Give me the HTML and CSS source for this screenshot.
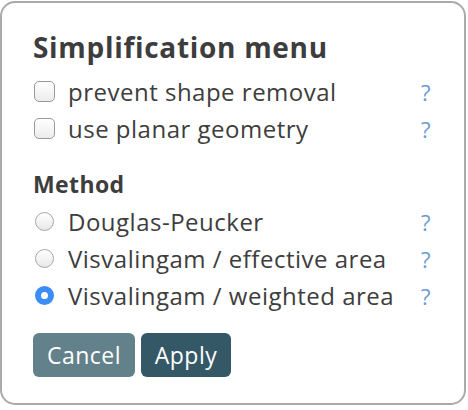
FILE: index.html
```html
<!DOCTYPE html>
<html>
<head>
<meta charset="utf-8">
<link rel="stylesheet" href="styles.css">
</head>
<body>
<div class="menu">
  <h1 class="title">Simplification menu</h1>
  <div class="row">
    <span class="check"></span>
    <span class="label">prevent shape removal</span>
    <span class="help">?</span>
  </div>
  <div class="row">
    <span class="check"></span>
    <span class="label">use planar geometry</span>
    <span class="help">?</span>
  </div>
  <h2 class="section">Method</h2>
  <div class="row radio-row">
    <span class="radio"></span>
    <span class="label">Douglas-Peucker</span>
    <span class="help">?</span>
  </div>
  <div class="row radio-row">
    <span class="radio"></span>
    <span class="label">Visvalingam / effective area</span>
    <span class="help">?</span>
  </div>
  <div class="row radio-row">
    <span class="radio selected"></span>
    <span class="label">Visvalingam / weighted area</span>
    <span class="help">?</span>
  </div>
  <div class="buttons">
    <button class="btn cancel">Cancel</button>
    <button class="btn apply">Apply</button>
  </div>
</div>
</body>
</html>
```

FILE: styles.css
```css
html, body {
  margin: 0;
  padding: 0;
  background: #ffffff;
}
body {
  font-family: "Open Sans", "Lato", sans-serif;
  color: #3d3d3d;
}
.menu {
  box-sizing: border-box;
  margin: 1px 0 0 0;
  width: 466px;
  height: 404px;
  border: 2px solid #aaaaaa;
  border-radius: 15px;
  padding: 26px 0 0 31px;
  display: flex;
  flex-direction: column;
}
.title {
  margin: 0 0 8px 0;
  font-size: 28px;
  line-height: 36px;
  font-weight: 700;
  letter-spacing: 0.7px;
}
.row {
  display: flex;
  align-items: center;
  height: 37px;
}
.label {
  font-size: 24px;
  margin-left: 13px;
  width: 353px;
  white-space: nowrap;
  letter-spacing: 0.5px;
}
.help {
  color: #6d9bd0;
  font-size: 22px;
}
.check {
  box-sizing: border-box;
  width: 21px;
  height: 21px;
  border: 1px solid #9a9a9a;
  border-radius: 5px;
  background: linear-gradient(#ffffff, #ececec);
  margin-left: 1px;
}
.section {
  margin: 22px 0 4px 0;
  font-size: 23px;
  line-height: 30px;
  font-weight: 700;
  letter-spacing: 0.4px;
}
.radio {
  box-sizing: border-box;
  width: 19px;
  height: 19px;
  border: 1px solid #a8a8a8;
  border-radius: 50%;
  background: linear-gradient(#ffffff, #e8e8e8);
  margin-left: 2px;
  margin-right: 1px;
}
.radio.selected {
  border: 6px solid #3d8df7;
  background: #ffffff;
}
.buttons {
  display: flex;
  gap: 6px;
  margin-top: 19px;
}
.btn {
  font-family: "Open Sans", "Lato", sans-serif;
  font-size: 23px;
  color: #ffffff;
  border: none;
  border-radius: 6px;
  height: 44px;
  padding: 0;
  margin: 0;
  letter-spacing: 0.5px;
}
.cancel {
  background: #62818b;
  width: 102px;
}
.apply {
  background: #345866;
  width: 90px;
}
```
